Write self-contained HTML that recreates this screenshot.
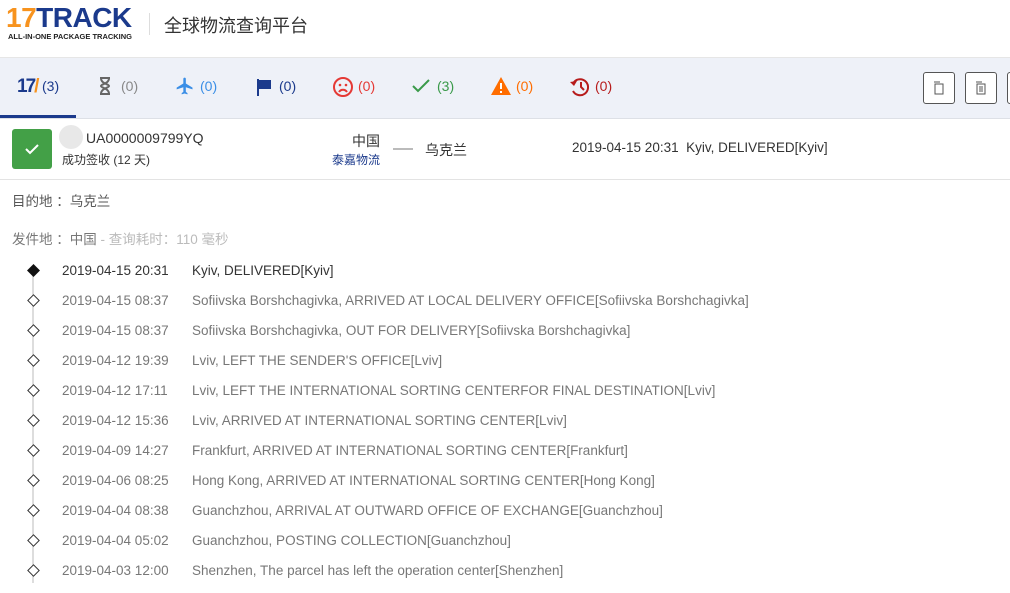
<!DOCTYPE html>
<html><head><meta charset="utf-8"><style>
body{margin:0;width:1010px;height:582px;overflow:hidden;background:#fff;font-family:"Liberation Sans","Noto Sans CJK SC",sans-serif;font-size:13.5px;color:#333;position:relative}
.a{position:absolute;white-space:nowrap}
.top{position:absolute;left:0;top:0;width:1010px;height:57px;background:#fff;border-bottom:1px solid #e6e6e6;box-shadow:0 1px 3px rgba(0,0,0,.06)}
.tabs{position:absolute;left:0;top:58px;width:1010px;height:60px;background:#eef1f8;border-bottom:1px solid #dde0e6}
.tab{position:absolute;top:78px;font-size:14px}
.btn{position:absolute;top:72px;width:32px;height:32px;border:1px solid #555;border-radius:3px;background:#fff;box-sizing:border-box}
.row{position:absolute;left:0;width:1010px;height:30px}
.d{position:absolute;left:29px;top:3px;width:7px;height:7px;border:1px solid #333;background:#fff;transform:rotate(45deg)}
.t{position:absolute;left:62px;top:0;color:#777}
.x{position:absolute;left:192px;top:0;color:#777}
</style></head><body>
<div class="top">
<div class="a" style="left:6px;top:2px;font:bold 28px 'Liberation Sans',sans-serif;letter-spacing:-0.5px"><span style="color:#f7931e">17</span><span style="color:#1b3a8c">TRACK</span></div>
<div class="a" style="left:8px;top:32px;font:bold 7.5px 'Liberation Sans',sans-serif;color:#222">ALL-IN-ONE PACKAGE TRACKING</div>
<div class="a" style="left:149px;top:13px;width:1px;height:22px;background:#ddd"></div>
<div class="a" style="left:164px;top:12px;font-size:18px;color:#333">全球物流查询平台</div>
</div>
<div class="tabs"></div>
<div class="a" style="left:0;top:115px;width:76px;height:3px;background:#1b3a8c"></div>
<div class="tab" style="left:17px;top:76px;font:bold 19px 'Liberation Sans';color:#1b3a8c;letter-spacing:-2px">17<span style="color:#f7931e">/</span></div>
<div class="tab" style="left:42px;color:#1b3a8c">(3)</div>
<div class="tab" style="left:98px;top:76px"><svg width="14" height="20"><path d="M2 2h10M2 18h10M3 2c0 6 8 6 8 8s-8 2-8 8M11 2c0 6-8 6-8 8s8 2 8 8" fill="none" stroke="#666" stroke-width="2"/></svg></div>
<div class="tab" style="left:121px;color:#888">(0)</div>
<div class="tab" style="left:175px;top:76px"><svg width="20" height="20" viewBox="0 0 24 24"><path fill="#3a8ee6" d="M21 16v-2l-8-5V3.5a1.5 1.5 0 0 0-3 0V9l-8 5v2l8-2.5V19l-2 1.5V22l3.5-1 3.5 1v-1.5L13 19v-5.5z"/></svg></div>
<div class="tab" style="left:200px;color:#3a8ee6">(0)</div>
<div class="tab" style="left:256px;top:78px"><svg width="16" height="18"><path d="M2 1v17" stroke="#1b3a8c" stroke-width="2"/><path d="M3 2h12v9H3z" fill="#1b3a8c"/></svg></div>
<div class="tab" style="left:279px;color:#1b3a8c">(0)</div>
<div class="tab" style="left:332px;top:76px"><svg width="22" height="22"><circle cx="11" cy="11" r="9" fill="none" stroke="#e53935" stroke-width="2"/><circle cx="8" cy="9" r="1.3" fill="#e53935"/><circle cx="14" cy="9" r="1.3" fill="#e53935"/><path d="M7 16c2-3 6-3 8 0" fill="none" stroke="#e53935" stroke-width="2"/></svg></div>
<div class="tab" style="left:358px;color:#e53935">(0)</div>
<div class="tab" style="left:412px;top:78px"><svg width="18" height="16"><path d="M1 8l5 5L17 2" fill="none" stroke="#3a9a4a" stroke-width="2"/></svg></div>
<div class="tab" style="left:437px;color:#3a9a4a">(3)</div>
<div class="tab" style="left:490px;top:76px"><svg width="22" height="20"><path d="M11 1L21 19H1z" fill="#ff6d00"/><path d="M11 7v6M11 15v2" stroke="#fff" stroke-width="2"/></svg></div>
<div class="tab" style="left:516px;color:#ff6d00">(0)</div>
<div class="tab" style="left:569px;top:76px"><svg width="22" height="22"><path d="M5 6a8 8 0 1 1-1 9" fill="none" stroke="#b71c1c" stroke-width="2"/><path d="M1 6l4 4 3-5z" fill="#b71c1c"/><path d="M12 6v5l3 3" fill="none" stroke="#b71c1c" stroke-width="2"/></svg></div>
<div class="tab" style="left:595px;color:#b71c1c">(0)</div>
<div class="btn" style="left:923px"><svg width="30" height="30"><rect x="11" y="11" width="8" height="10" fill="none" stroke="#555"/><path d="M10 9h6" stroke="#555"/></svg></div>
<div class="btn" style="left:965px"><svg width="30" height="30"><rect x="11" y="11" width="8" height="10" fill="none" stroke="#555"/><path d="M13 14h4M13 16h4M13 18h4M10 9h6" stroke="#555"/></svg></div>
<div class="btn" style="left:1007px"></div>

<div class="a" style="left:12px;top:129px;width:40px;height:40px;background:#43a047;border-radius:3px"><svg width="40" height="40"><path d="M14 20l4 4 8-8" fill="none" stroke="#fff" stroke-width="2"/></svg></div>
<div class="a" style="left:59px;top:125px;width:24px;height:24px;border-radius:50%;background:#e8e8e8"></div>
<div class="a" style="left:86px;top:130px;font-size:14px;color:#333">UA0000009799YQ</div>
<div class="a" style="left:62px;top:151px;font-size:12px;color:#333">成功签收 (12 天)</div>
<div class="a" style="left:352px;top:131px;font-size:14px;color:#333">中国</div>
<div class="a" style="left:332px;top:151px;font-size:12px;color:#1b3a8c">泰嘉物流</div>
<div class="a" style="left:393px;top:148px;width:20px;height:2px;background:#bbb"></div>
<div class="a" style="left:425px;top:140px;font-size:14px;color:#333">乌克兰</div>
<div class="a" style="left:572px;top:140px;color:#333">2019-04-15 20:31&nbsp; Kyiv, DELIVERED[Kyiv]</div>
<div class="a" style="left:0;top:179px;width:1010px;height:1px;background:#e3e3e3"></div>
<div class="a" style="left:12px;top:190px;color:#555">目的地 ：乌克兰</div>
<div class="a" style="left:12px;top:228px;color:#777">发件地 ：中国<span style="color:#bbb"> - 查询耗时：110 毫秒</span></div>
<div class="a" style="left:32px;top:273px;width:2px;height:310px;background:#ddd"></div>

<div class="row" style="top:263px"><div class="d" style="background:#111;border-color:#111"></div><div class="t" style="color:#333">2019-04-15 20:31</div><div class="x" style="color:#333">Kyiv, DELIVERED[Kyiv]</div></div>
<div class="row" style="top:293px"><div class="d"></div><div class="t">2019-04-15 08:37</div><div class="x">Sofiivska Borshchagivka, ARRIVED AT LOCAL DELIVERY OFFICE[Sofiivska Borshchagivka]</div></div>
<div class="row" style="top:323px"><div class="d"></div><div class="t">2019-04-15 08:37</div><div class="x">Sofiivska Borshchagivka, OUT FOR DELIVERY[Sofiivska Borshchagivka]</div></div>
<div class="row" style="top:353px"><div class="d"></div><div class="t">2019-04-12 19:39</div><div class="x">Lviv, LEFT THE SENDER'S OFFICE[Lviv]</div></div>
<div class="row" style="top:383px"><div class="d"></div><div class="t">2019-04-12 17:11</div><div class="x">Lviv, LEFT THE INTERNATIONAL SORTING CENTERFOR FINAL DESTINATION[Lviv]</div></div>
<div class="row" style="top:413px"><div class="d"></div><div class="t">2019-04-12 15:36</div><div class="x">Lviv, ARRIVED AT INTERNATIONAL SORTING CENTER[Lviv]</div></div>
<div class="row" style="top:443px"><div class="d"></div><div class="t">2019-04-09 14:27</div><div class="x">Frankfurt, ARRIVED AT INTERNATIONAL SORTING CENTER[Frankfurt]</div></div>
<div class="row" style="top:473px"><div class="d"></div><div class="t">2019-04-06 08:25</div><div class="x">Hong Kong, ARRIVED AT INTERNATIONAL SORTING CENTER[Hong Kong]</div></div>
<div class="row" style="top:503px"><div class="d"></div><div class="t">2019-04-04 08:38</div><div class="x">Guanchzhou, ARRIVAL AT OUTWARD OFFICE OF EXCHANGE[Guanchzhou]</div></div>
<div class="row" style="top:533px"><div class="d"></div><div class="t">2019-04-04 05:02</div><div class="x">Guanchzhou, POSTING COLLECTION[Guanchzhou]</div></div>
<div class="row" style="top:563px"><div class="d"></div><div class="t">2019-04-03 12:00</div><div class="x">Shenzhen, The parcel has left the operation center[Shenzhen]</div></div>
</body></html>
